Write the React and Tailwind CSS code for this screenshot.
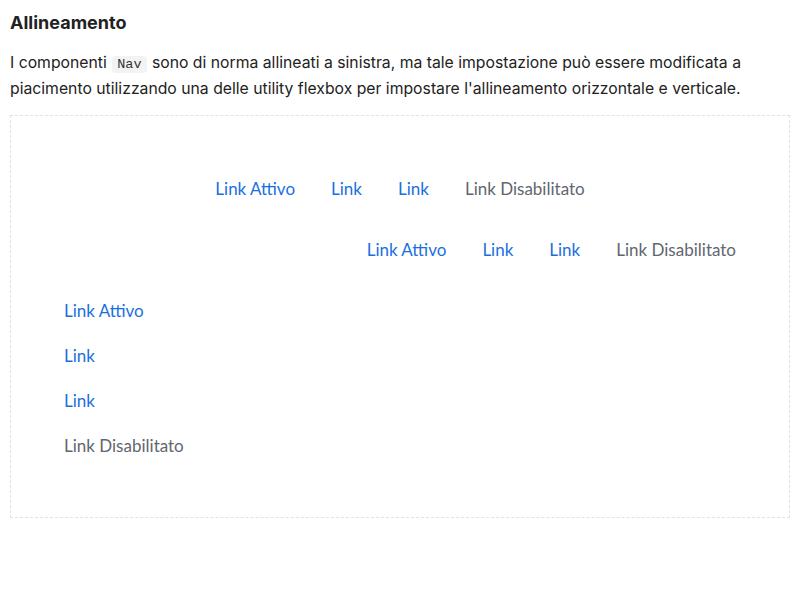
const NavItems = ({ vertical }) => {
  const items = [
    { label: 'Link Attivo', disabled: false },
    { label: 'Link', disabled: false },
    { label: 'Link', disabled: false },
    { label: 'Link Disabilitato', disabled: true },
  ];
  return items.map((item, i) => (
    <a
      key={i}
      href="#"
      className={
        (vertical ? 'h-[45px] ' : 'h-10 ') +
        'flex items-center px-[18px] text-[17px] font-[Lato,sans-serif] ' +
        (item.disabled ? 'text-[#5f6670] pointer-events-none' : 'text-[#1a6fe0]')
      }
    >
      {item.label}
    </a>
  ));
};

export default function App() {
  return (
    <div className="min-h-[600px] bg-white px-[10px] pt-[11px] font-[Inter,'Liberation_Sans',sans-serif] text-[#222]">
      <h3 className="text-[18px] font-bold leading-6 text-[#222]">Allineamento</h3>
      <p className="mt-[16px] text-[15.75px] leading-6 text-[#222]">
        I componenti{' '}
        <code className="mx-[1px] rounded bg-[#f3f3f3] px-[5px] py-[1px] font-['Liberation_Mono',monospace] text-[13.5px] text-[#333]">
          Nav
        </code>{' '}
        sono di norma allineati a sinistra, ma tale impostazione può essere modificata a
        piacimento utilizzando una delle utility flexbox per impostare l'allineamento orizzontale e verticale.
      </p>
      <div className="mt-[14px] border border-dashed border-[#e2e2e2] px-[35px] pt-[53px] pb-[49px]">
        <nav className="flex justify-center">
          <NavItems />
        </nav>
        <nav className="mt-[21px] flex justify-end">
          <NavItems />
        </nav>
        <nav className="mt-[18px] flex flex-col items-start">
          <NavItems vertical />
        </nav>
      </div>
    </div>
  );
}
